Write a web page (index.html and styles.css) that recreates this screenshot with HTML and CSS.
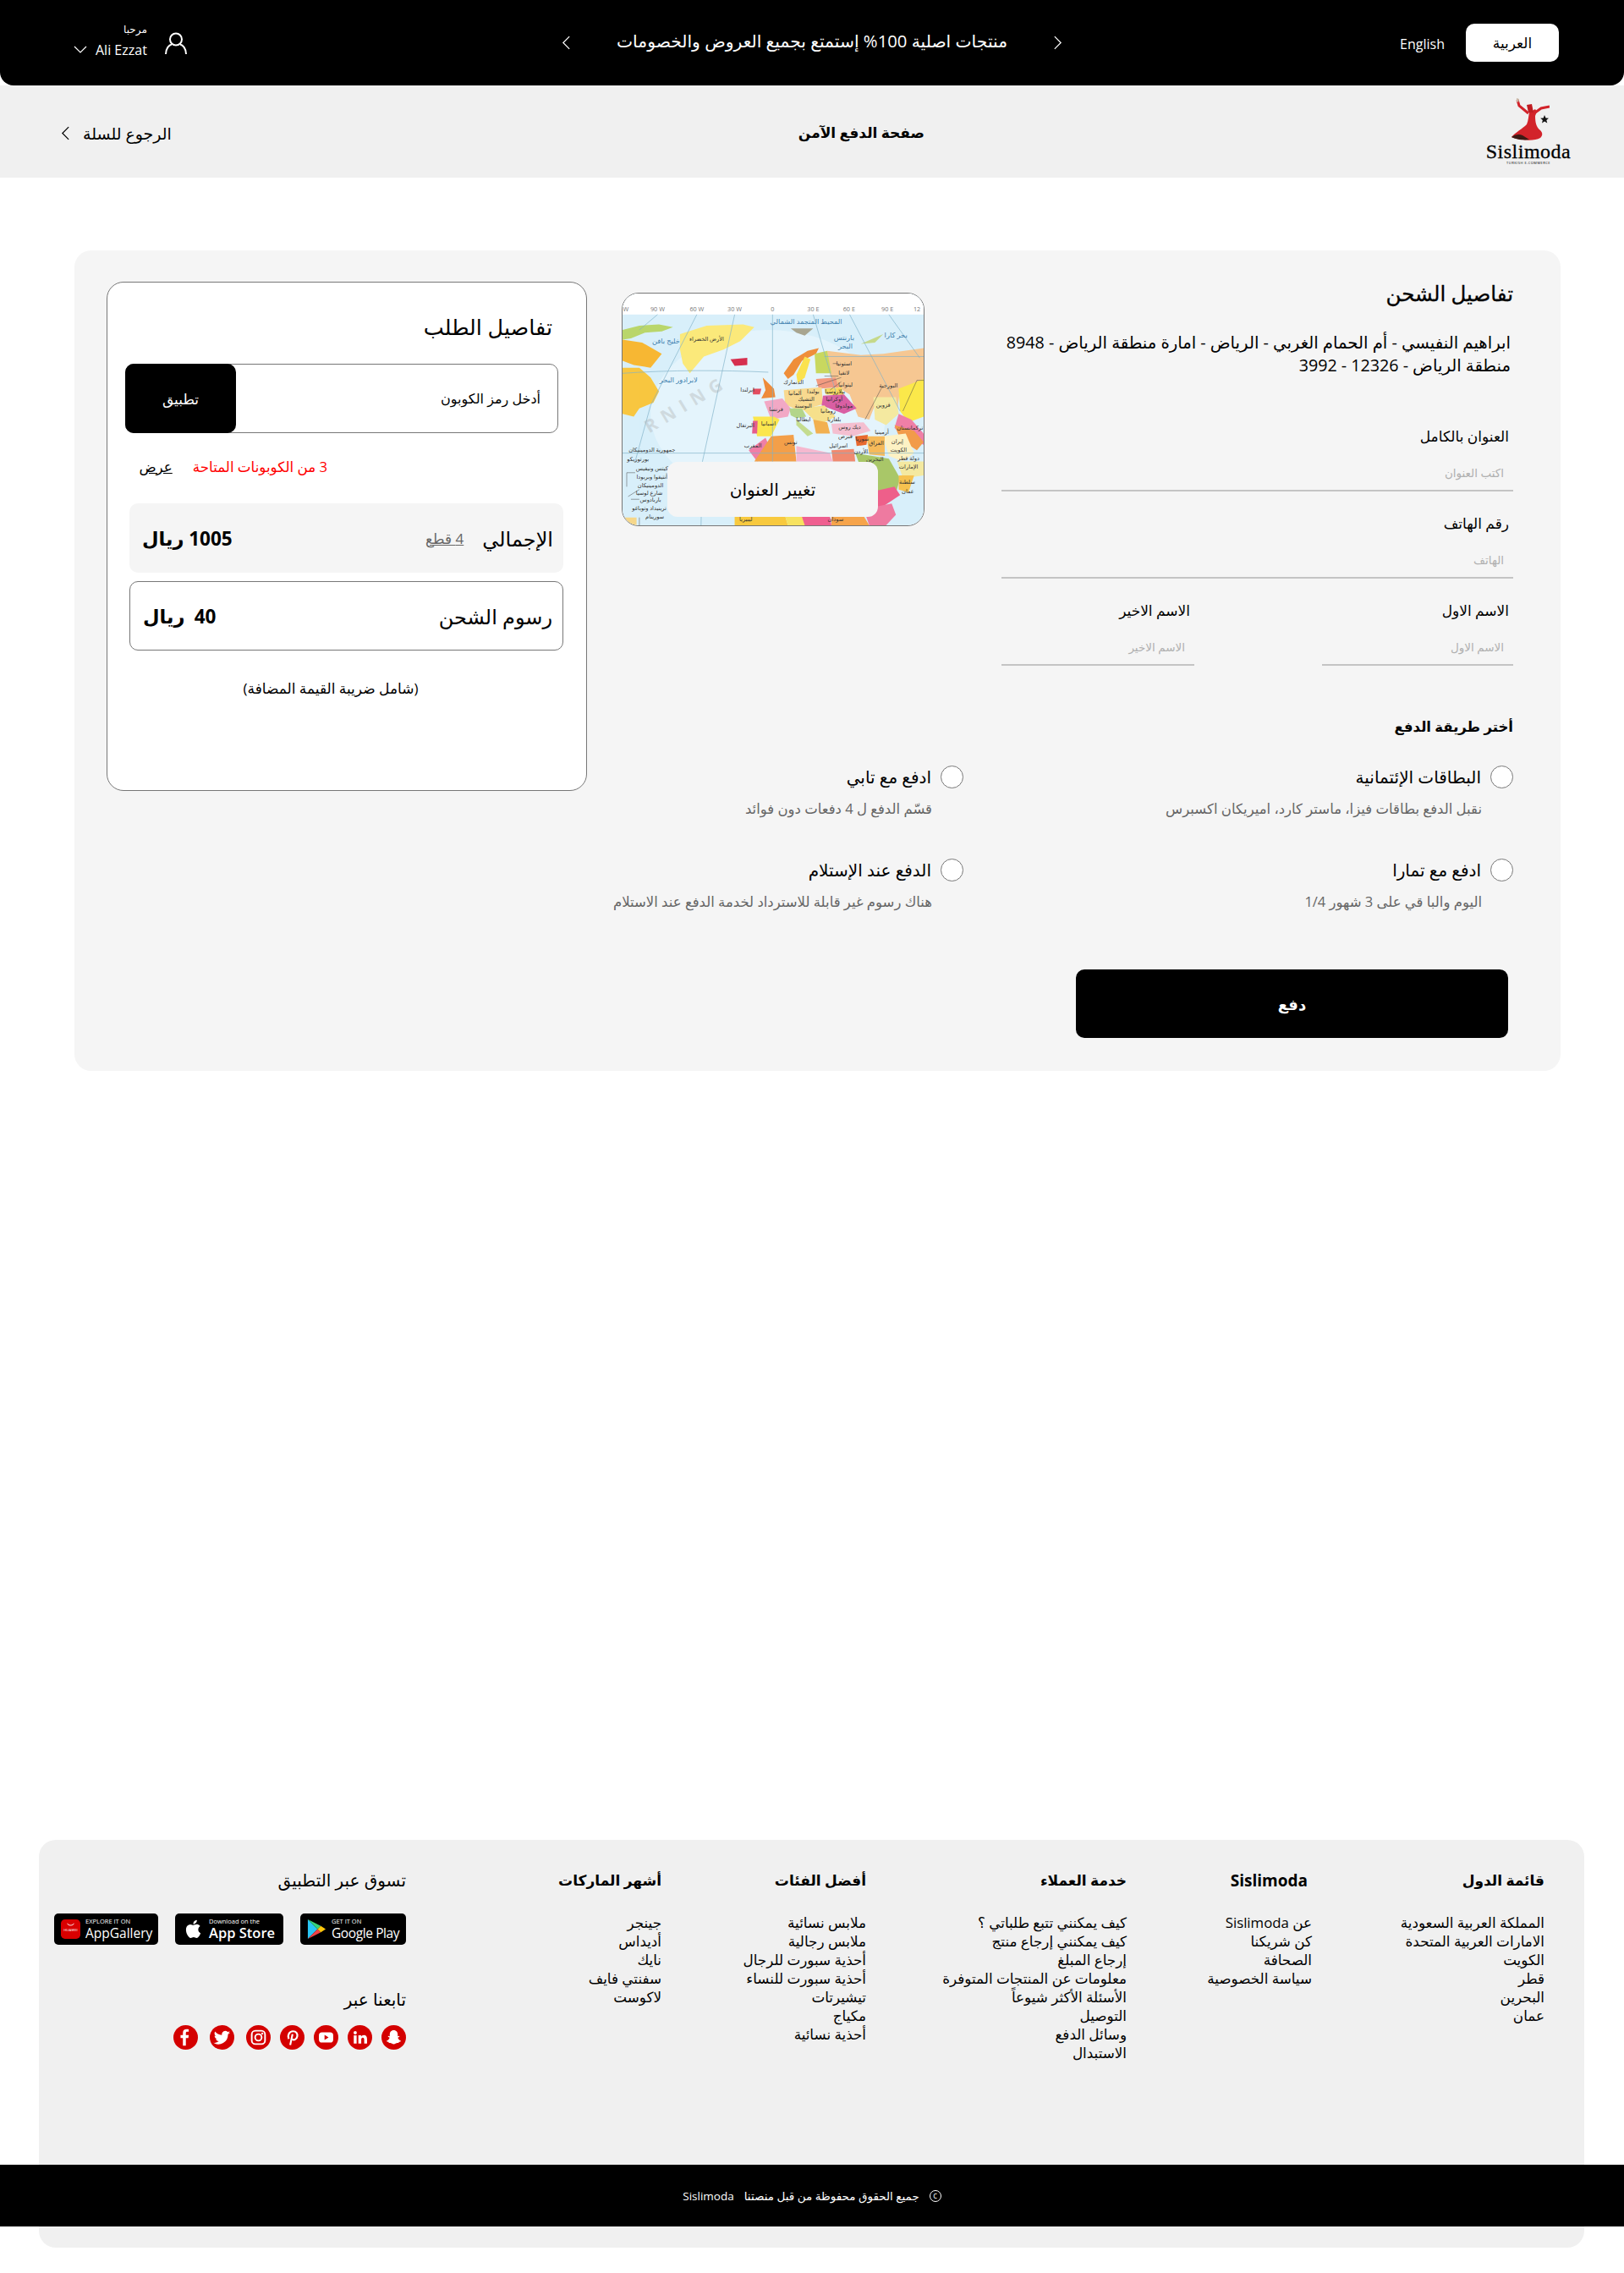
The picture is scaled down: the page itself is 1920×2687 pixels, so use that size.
FILE: index.html
```html
<!DOCTYPE html>
<html lang="ar" dir="rtl">

<head>
    <meta charset="UTF-8">
    <meta name="viewport" content="width=device-width, initial-scale=1.0">
    <title>Sislimoda</title>
    <link rel="stylesheet" href="styles.css">
</head>

<body>
    <header class="topbar">
        <div class="lang">
            <a class="lang-btn">العربية</a>
            <a class="lang-link" dir="ltr">English</a>
        </div>
        <div class="promo">
            <svg class="chev" viewBox="0 0 12 20"><path d="M2 2l8 8-8 8" /></svg>
            <span class="promo-text">منتجات اصلية 100% إستمتع بجميع العروض والخصومات</span>
            <svg class="chev" viewBox="0 0 12 20"><path d="M10 2l-8 8 8 8" /></svg>
        </div>
        <div class="user">
            <svg class="user-icon" viewBox="0 0 26 26"><circle cx="13" cy="8.500" r="7" /><path d="M1 26c0-7 4-11 7-11.500M25 26c0-7-4-11-7-11.500" /></svg>
            <div class="user-text">
                <span class="hello">مرحبا</span>
                <div class="user-name">
                    <span dir="ltr">Ali Ezzat</span>
                    <svg class="small-chev" viewBox="0 0 16 10"><path d="M1 1l7 7 7-7" /></svg>
                </div>
            </div>
        </div>
    </header>

    <div class="subbar">
        <div class="logo">
            <svg class="logo-art" viewBox="0 0 50 52">
                <path d="M26 17c-1 5-1 9-3 14C18 36 9 41 5 46c6 3 26 6 34 1 3-3 3-6 0-9-5-4-6-10-6-17l2-5-2-3z" fill="#d2232a" />
                <path d="M5 46c4-3 9-4 13-2l8 5c-6 1-16 0-21-3z" fill="#3c1a14" />
                <path d="M25 18L14 9l-2-7M33 17l7-5 10-2" fill="none" stroke="#d2232a" stroke-width="3" />
                <path d="M11 0l3 1-1 4-2-1z" fill="#c9b6a6" />
                <path d="M23 8l6-1 2 10h-6z" fill="#c01c22" />
                <path d="M44 20l1.500 3.500 3.500.300-2.700 2.200 1 3.500-3.300-2-3 2 .9-3.500-2.700-2.200 3.500-.300z" fill="#111" />
            </svg>
            <span class="logo-name" dir="ltr">Sislimoda</span>
            <span class="logo-sub" dir="ltr">TURKISH E.COMMERCE</span>
        </div>
        <h2 class="secure-title">صفحة الدفع الآمن</h2>
        <a class="back-link">
            <span>الرجوع للسلة</span>
            <svg class="chev chev-dark" viewBox="0 0 12 20"><path d="M10 2l-8 8 8 8" /></svg>
        </a>
    </div>

    <main class="checkout">
        <div class="checkout-main">
            <div class="shipping-row">
                <section class="shipping">
                    <h2 class="section-title">تفاصيل الشحن</h2>
                    <p class="address">ابراهيم النفيسي - أم الحمام الغربي - الرياض - امارة منطقة الرياض - 8948 منطقة الرياض - 12326 - 3992</p>
                    <div class="field">
                        <label>العنوان بالكامل</label>
                        <input type="text" placeholder="اكتب العنوان">
                    </div>
                    <div class="field">
                        <label>رقم الهاتف</label>
                        <input type="text" placeholder="الهاتف">
                    </div>
                    <div class="field-pair">
                        <div class="field">
                            <label>الاسم الاول</label>
                            <input type="text" placeholder="الاسم الاول">
                        </div>
                        <div class="field">
                            <label>الاسم الاخير</label>
                            <input type="text" placeholder="الاسم الاخير">
                        </div>
                    </div>
                </section>

                <div class="map-box">
                    <svg class="map" viewBox="0 0 1074 828" preserveAspectRatio="none">
                        <rect width="1074" height="828" fill="#d8effa" />
                        <ellipse cx="520" cy="430" rx="420" ry="300" fill="#e4f4fc" />
                        <rect width="1074" height="75" fill="#fff" />

                        <!-- americas -->
                        <path d="M0 130l60-15 70-5 50 10-40 15-60 5-50 20-30 5z" fill="#b9d66b" />
                        <path d="M0 165l70 10 70 40-40 50-60-10-40-15z" fill="#f7b733" />
                        <path d="M0 265h60l40 35 30 50-20 40-50 20-20 30-40-10z" fill="#f8c640" />
                        <path d="M205 145l95-30 130-5 40 10-50 50-60 30-70 25-50 60-25-35-10-50z" fill="#fbe97a" />
                        <path d="M385 235l60-5v25l-45 3z" fill="#d6304f" />
                        <path d="M0 800h50v28H0z" fill="#f6d78a" />

                        <!-- north and russia -->
                        <path d="M600 125h80l-30 25-30-10z" fill="#a8a590" />
                        <path d="M850 180l80-35-30 30z" fill="#c5d98a" />
                        <path d="M730 205l120 15 80-5 144-20v135l-84 10-10 80-80-20-20 50-40-10-30-80-50-30-20-40z" fill="#f6c792" />
                        <path d="M575 285l35-50 50-30 40-10-10 20-50 25-30 50-20 15z" fill="#ef8e3a" />
                        <path d="M620 290l30-65 20 10-20 65-25 20z" fill="#fbe24f" />
                        <path d="M685 215l45-10 15 80h-55z" fill="#c8d85f" />
                        <path d="M690 305l70-5 10 35-70 5z" fill="#f29a80" />

                        <!-- europe -->
                        <path d="M500 300l40 40 5 30-50 5 15-30z" fill="#ee8b3a" />
                        <path d="M465 340h30l-5 20h-25z" fill="#e34d60" />
                        <path d="M575 345l135-10 5 60-85 25-50-25z" fill="#f8d98f" />
                        <path d="M720 340l60-5 10 30-65-5z" fill="#f8d860" />
                        <path d="M715 365l75-5 45 50-45 20-80-30z" fill="#d95fa3" />
                        <path d="M505 385l65-10 30 35-10 30-60 10z" fill="#f2a8c5" />
                        <path d="M640 410l80-10 40 40-60 30-30-30z" fill="#f6e08b" />
                        <path d="M595 410h45l15 30-35 5-20-10z" fill="#b3d58a" />
                        <path d="M620 450l60 50-20 10-40-40z" fill="#c4dc8f" />
                        <path d="M680 450l50 10 10 40h-50z" fill="#f2b050" />
                        <path d="M465 440h75l20 10-30 60h-50z" fill="#fbe64e" />
                        <path d="M465 455h17l-2 45h-18z" fill="#e55d8d" />
                        <path d="M745 465l115-5 25 30-65 20-70-10z" fill="#f4bfd0" />

                        <!-- asia -->
                        <path d="M985 340l89-35v135l-54 20-30-40z" fill="#fbe84a" />
                        <path d="M895 370h80l10 60-45 40-40-20z" fill="#f4e9a0" />
                        <path d="M985 430l45 20 44 50v40l-74-30-30-30z" fill="#ef7fa7" />
                        <path d="M970 470l70 20 34 40-24 30-60-40z" fill="#f29b4a" />
                        <path d="M930 510l80-10 30 70-40 30-50-20z" fill="#fdf2c4" />
                        <path d="M870 510h65v70l-55-5z" fill="#f6ba5a" />
                        <path d="M830 510l45-5-5 35-35 5z" fill="#e8692f" />
                        <path d="M830 570l120 20 40 70-20 70-60 15-50-95z" fill="#a9c768" />
                        <path d="M980 600h94v50l-74 10z" fill="#f4e9a0" />
                        <path d="M985 650h55l-20 60-35-10z" fill="#f6c24f" />
                        <path d="M880 710l90-20 20 30-60 40-40 10z" fill="#ee5f8a" />

                        <!-- africa -->
                        <path d="M450 560l60-45 20 45-50 40z" fill="#ef7fa7" />
                        <path d="M470 600l60-90 80-5 10 95z" fill="#f39f49" />
                        <path d="M620 545l120 25 10 30H620z" fill="#f5b8cf" />
                        <path d="M745 560l80-5 5 45h-80z" fill="#f08a70" />
                        <path d="M400 795h180l10 33H400z" fill="#f8c93e" />
                        <path d="M580 795h120v33H590z" fill="#f7e260" />
                        <path d="M640 798h100l5 30h-95z" fill="#ef5f90" />
                        <path d="M745 795h115l20 33H745z" fill="#f6a44b" />
                        <path d="M860 770l100-20 15 40-35 38h-60z" fill="#ee7aa0" />

                        <g class="map-lines">
                            <path d="M535 75v525M400 75L285 600l-5 228M265 75L100 400 45 600M125 75L60 130M680 75l80 275M810 75l180 345M950 75l110 155" />
                            <path d="M0 285c170-12 350-12 520-4M0 570h1074M720 225h354" />
                        </g>
                        <g class="map-leaders">
                            <path d="M720 295h50M690 330l90-30M740 345l40-30M865 450l60-115M1000 420l50-110h24M770 250h-20M45 640H15v50M60 700l-40 25M30 735h30M60 800v28" />
                        </g>

                        <text class="map-mark" x="95" y="500" transform="rotate(-31 95 500)" direction="ltr">R N I N G</text>

                        <g class="map-deg" direction="ltr">
                            <text x="12" y="65">W</text><text x="125" y="65">90 W</text><text x="265" y="65">60 W</text><text x="400" y="65">30 W</text><text x="535" y="65">0</text><text x="680" y="65">30 E</text><text x="808" y="65">60 E</text><text x="945" y="65">90 E</text><text x="1050" y="65">12</text>
                        </g>
                        <g class="map-sea">
                            <text x="655" y="108">المحيط المتجمد الشمالي</text>
                            <text x="155" y="178">خليج بافن</text>
                            <text x="790" y="166">بارنتس</text>
                            <text x="795" y="196">البحر</text>
                            <text x="975" y="156">بحر كارا</text>
                            <text x="200" y="318">لابرادور البحر</text>
                        </g>
                        <g class="map-label">
                            <text x="300" y="168">الأرض الخضراء</text>
                            <text x="790" y="258">استونيا</text>
                            <text x="790" y="291">لاتفيا</text>
                            <text x="795" y="331">ليتوانيا</text>
                            <text x="758" y="356">بيلاروسيا</text>
                            <text x="948" y="336">البورجية</text>
                            <text x="610" y="324">الدنمارك</text>
                            <text x="445" y="351">ايرلندا</text>
                            <text x="680" y="358">بولندا</text>
                            <text x="615" y="363">ألمانيا</text>
                            <text x="548" y="421">فرنسا</text>
                            <text x="755" y="384">أوكرانيا</text>
                            <text x="790" y="408">مولدوفا</text>
                            <text x="733" y="426">رومانيا</text>
                            <text x="520" y="471">اسبانيا</text>
                            <text x="438" y="476">البرتغال</text>
                            <text x="645" y="456">ايطاليا</text>
                            <text x="755" y="456">بلغاريا</text>
                            <text x="810" y="484">ديك روس</text>
                            <text x="645" y="408">البوسنة</text>
                            <text x="655" y="384">التشيك</text>
                            <text x="795" y="516">قبرص</text>
                            <text x="465" y="551">المغرب</text>
                            <text x="600" y="539">تونس</text>
                            <text x="770" y="551">اسرائيل</text>
                            <text x="855" y="526">سوريا</text>
                            <text x="905" y="541">العراق</text>
                            <text x="980" y="536">إيران</text>
                            <text x="985" y="566">الكويت</text>
                            <text x="850" y="571">الأردن</text>
                            <text x="1020" y="596">دولة قطر</text>
                            <text x="900" y="598">البحرين</text>
                            <text x="930" y="404">قزوين</text>
                            <text x="1025" y="486">تركمانستان</text>
                            <text x="925" y="503">أرمينيا</text>
                            <text x="1018" y="714">عمان</text>
                            <text x="1020" y="626">الإمارات</text>
                            <text x="1015" y="680">سلطنة</text>
                            <text x="105" y="564">جمهورية الدومينيكان</text>
                            <text x="55" y="598">بورتوريكو</text>
                            <text x="105" y="631">كيتس ونيفيس</text>
                            <text x="105" y="663">أنتيغوا وبربودا</text>
                            <text x="100" y="693">الدومينيكان</text>
                            <text x="95" y="718">شارع لوسيا</text>
                            <text x="100" y="744">باربادوس</text>
                            <text x="95" y="774">ترينيداد وتوباغو</text>
                            <text x="115" y="804">سورينام</text>
                            <text x="440" y="812">ليبيريا</text>
                            <text x="760" y="812">سودان</text>
                        </g>
                    </svg>
                    <a class="change-address">تغيير العنوان</a>
                </div>
            </div>

            <section class="payment">
                <h3 class="payment-title">أختر طريقة الدفع</h3>
                <div class="pay-grid">
                    <div class="pay-item">
                        <div class="pay-head"><span class="radio"></span><span>البطاقات الإئتمانية</span></div>
                        <p class="pay-note">نقبل الدفع بطاقات فيزا، ماستر كارد، اميريكان اكسبرس</p>
                    </div>
                    <div class="pay-item">
                        <div class="pay-head"><span class="radio"></span><span>ادفع مع تابي</span></div>
                        <p class="pay-note">قسّم الدفع ل 4 دفعات دون فوائد</p>
                    </div>
                    <div class="pay-item">
                        <div class="pay-head"><span class="radio"></span><span>ادفع مع تمارا</span></div>
                        <p class="pay-note">اليوم والبا قي على 3 شهور 1/4</p>
                    </div>
                    <div class="pay-item">
                        <div class="pay-head"><span class="radio"></span><span>الدفع عند الإستلام</span></div>
                        <p class="pay-note">هناك رسوم غير قابلة للاسترداد لخدمة الدفع عند الاستلام</p>
                    </div>
                </div>
                <button class="pay-btn">دفع</button>
            </section>
        </div>

        <aside class="summary">
            <h2 class="summary-title">تفاصيل الطلب</h2>
            <div class="coupon">
                <span class="coupon-hint">أدخل رمز الكوبون</span>
                <button class="coupon-btn">تطبيق</button>
            </div>
            <div class="coupon-info">
                <span class="coupon-count">3 من الكوبونات المتاحة</span>
                <a class="coupon-view">عرض</a>
            </div>
            <div class="sum-row sum-total">
                <div class="sum-label">
                    <span>الإجمالي</span>
                    <a class="sum-pieces">4 قطع</a>
                </div>
                <strong class="sum-value">1005 ريال</strong>
            </div>
            <div class="sum-row sum-ship">
                <span class="sum-label">رسوم الشحن</span>
                <strong class="sum-value">40&ensp;ريال</strong>
            </div>
            <p class="vat">(شامل ضريبة القيمة المضافة)</p>
        </aside>
    </main>

    <footer class="footer">
        <div class="footer-cols">
            <div class="foot-col">
                <h4>قائمة الدول</h4>
                <ul>
                    <li>المملكة العربية السعودية</li>
                    <li>الامارات العربية المتحدة</li>
                    <li>الكويت</li>
                    <li>قطر</li>
                    <li>البحرين</li>
                    <li>عمان</li>
                </ul>
            </div>
            <div class="foot-col">
                <h4 class="foot-latin">Sislimoda</h4>
                <ul>
                    <li>عن Sislimoda</li>
                    <li>كن شريكنا</li>
                    <li>الصحافة</li>
                    <li>سياسة الخصوصية</li>
                </ul>
            </div>
            <div class="foot-col">
                <h4>خدمة العملاء</h4>
                <ul>
                    <li>كيف يمكنني تتبع طلباتي ؟</li>
                    <li>كيف يمكنني إرجاع منتج</li>
                    <li>إرجاع المبلغ</li>
                    <li>معلومات عن المنتجات المتوفرة</li>
                    <li>الأسئلة الأكثر شيوعاً</li>
                    <li>التوصيل</li>
                    <li>وسائل الدفع</li>
                    <li>الاستبدال</li>
                </ul>
            </div>
            <div class="foot-col">
                <h4>أفضل الفئات</h4>
                <ul>
                    <li>ملابس نسائية</li>
                    <li>ملابس رجالية</li>
                    <li>أحذية سبورت للرجال</li>
                    <li>أحذية سبورت للنساء</li>
                    <li>تيشيرتات</li>
                    <li>مكياج</li>
                    <li>أحذية نسائية</li>
                </ul>
            </div>
            <div class="foot-col">
                <h4>أشهر الماركات</h4>
                <ul>
                    <li>جينجر</li>
                    <li>أديداس</li>
                    <li>نايك</li>
                    <li>سفنتي فايف</li>
                    <li>لاكوست</li>
                </ul>
            </div>
            <div class="foot-col foot-apps">
                <h4>تسوق عبر التطبيق</h4>
                <div class="badges">
                    <a class="badge badge-play" dir="ltr">
                        <svg class="badge-icon" viewBox="0 0 24 26">
                            <path d="M1 1l12 12L1 25z" fill="#29c5f4" />
                            <path d="M1 1l16 8-4 4z" fill="#37d27a" />
                            <path d="M1 25l16-8-4-4z" fill="#ee4245" />
                            <path d="M17 9l6 4-6 4-4-4z" fill="#fdc70c" />
                        </svg>
                        <span class="badge-text"><small>GET IT ON</small><b>Google Play</b></span>
                    </a>
                    <a class="badge badge-apple" dir="ltr">
                        <svg class="badge-icon" viewBox="0 0 24 24"><path fill="#fff" d="M17.050 12.540c-.03-2.800 2.290-4.150 2.390-4.210-1.300-1.900-3.330-2.170-4.050-2.200-1.720-.17-3.360 1.010-4.240 1.010-.87 0-2.220-.99-3.660-.96-1.880.03-3.620 1.090-4.590 2.770-1.960 3.400-.5 8.430 1.410 11.180.93 1.350 2.040 2.870 3.500 2.810 1.400-.06 1.930-.91 3.630-.91 1.690 0 2.170.91 3.660.88 1.510-.03 2.470-1.370 3.390-2.730 1.070-1.560 1.510-3.080 1.530-3.160-.03-.01-2.940-1.130-2.970-4.480zM14.270 4.300c.77-.94 1.290-2.240 1.150-3.540-1.110.05-2.460.74-3.260 1.670-.71.830-1.340 2.160-1.170 3.430 1.240.1 2.510-.63 3.280-1.560z" /></svg>
                        <span class="badge-text"><small>Download on the</small><b>App Store</b></span>
                    </a>
                    <a class="badge badge-huawei" dir="ltr">
                        <svg class="badge-icon" viewBox="0 0 24 24">
                            <rect width="24" height="24" rx="5" fill="#d90000" />
                            <path d="M8 5c1 3 7 3 8 0" fill="none" stroke="#fff" stroke-width="1" />
                            <text class="huawei-word" x="12" y="15">HUAWEI</text>
                        </svg>
                        <span class="badge-text"><small>EXPLORE IT ON</small><b>AppGallery</b></span>
                    </a>
                </div>
                <h4 class="follow-title">تابعنا عبر</h4>
                <div class="socials">
                    <a class="social"><svg viewBox="0 0 24 24"><path fill="#fff" d="M12 5c2.600 0 3.900 2 3.900 4v1.900l1.400-.3c.5.200.4.800-.1 1l-1.200.6c.4 1.500 1.500 2.600 3 3.100.2.600-1 1-1.900 1.100l-.3.900c-1.400-.1-2.300.1-3.100.8-1 .7-2.400.7-3.400 0-.8-.7-1.700-.9-3.100-.8l-.3-.9c-.9-.1-2.100-.5-1.900-1.100 1.500-.5 2.600-1.600 3-3.100l-1.200-.6c-.5-.2-.6-.8-.1-1l1.400.3V9c0-2 1.300-4 3.900-4z" /></svg></a>
                    <a class="social"><svg viewBox="0 0 24 24"><rect x="6" y="10" width="2.800" height="8" fill="#fff" /><circle cx="7.400" cy="7.400" r="1.600" fill="#fff" /><path fill="#fff" d="M10.500 10h2.700v1.200c.5-.8 1.400-1.400 2.600-1.400 2.300 0 3.200 1.400 3.200 3.800V18h-2.800v-3.900c0-1.100-.4-1.900-1.400-1.900s-1.500.8-1.500 1.900V18h-2.800z" /></svg></a>
                    <a class="social"><svg viewBox="0 0 24 24"><rect x="5" y="7" width="14" height="10" rx="3" fill="#fff" /><path d="M10.500 9.500l4 2.500-4 2.500z" fill="#d40000" /></svg></a>
                    <a class="social"><svg viewBox="0 0 24 24"><path fill="none" stroke="#fff" stroke-width="1.800" d="M8.600 13.500C7 10 9 6 12.800 6c3.200 0 4.600 2.300 4.100 5-.5 2.800-3.300 4.200-4.700 2.600M12.300 8.800L10 19.500" /></svg></a>
                    <a class="social"><svg viewBox="0 0 24 24"><rect x="5.500" y="5.500" width="13" height="13" rx="3.500" fill="none" stroke="#fff" stroke-width="1.600" /><circle cx="12" cy="12" r="3.200" fill="none" stroke="#fff" stroke-width="1.600" /><circle cx="15.800" cy="8.200" r="1" fill="#fff" /></svg></a>
                    <a class="social social-far"><svg viewBox="0 0 24 24"><path fill="#fff" d="M20 7.200c-.6.300-1.200.4-1.900.5.700-.4 1.200-1 1.400-1.800-.6.400-1.300.6-2 .8a3.300 3.300 0 0 0-5.600 3c-2.700-.1-5.100-1.400-6.700-3.400a3.300 3.300 0 0 0 1 4.400c-.5 0-1-.2-1.500-.4 0 1.600 1.100 2.900 2.600 3.200-.5.100-1 .1-1.500 0 .4 1.300 1.600 2.200 3.100 2.300A6.600 6.600 0 0 1 3.500 17.200a9.300 9.300 0 0 0 14.300-8.300c.9-.4 1.600-1 2.200-1.700z" /></svg></a>
                    <a class="social social-far"><svg viewBox="0 0 24 24"><path fill="#fff" d="M15 6.500h-1.500c-1 0-1.300.5-1.300 1.400v1.800H15l-.4 2.900h-2.400V20H9.300v-7.400H7V9.700h2.300V7.500C9.300 5 10.700 4 12.800 4c1 0 1.800.1 2.200.1z" /></svg></a>
                </div>
            </div>
        </div>
        <div class="copyright">
            <span class="copy-mark">c</span>
            <span>جميع الحقوق محفوظة من قبل منصتنا</span>
            <span dir="ltr">Sislimoda</span>
        </div>
    </footer>
</body>

</html>
```

FILE: styles.css
```css
* {
    box-sizing: border-box;
}

body {
    margin: 0;
    background: #fff;
    color: #000;
    font-family: "Open Sans", "DejaVu Sans", sans-serif;
}

h2,
h3,
h4,
p,
ul {
    margin: 0;
    padding: 0;
}

ul {
    list-style: none;
}

/* top black bar */
.topbar {
    display: grid;
    grid-template-columns: 1fr auto 1fr;
    align-items: center;
    height: 101px;
    padding: 0 77px;
    background: #000;
    color: #fff;
    border-radius: 0 0 16px 16px;
}

.lang {
    display: flex;
    align-items: center;
    gap: 25px;
}

.lang-btn {
    width: 110px;
    height: 45px;
    line-height: 45px;
    text-align: center;
    background: #fff;
    color: #000;
    border-radius: 10px;
    font-size: 17px;
}

.lang-link {
    font-size: 16px;
    padding-top: 3px;
}

.promo {
    display: flex;
    align-items: center;
    justify-content: space-between;
    width: 592px;
}

.promo-text {
    margin-bottom: 5px;
    font-size: 20.300px;
}

.chev {
    width: 11px;
    height: 19px;
    fill: none;
    stroke: #fff;
    stroke-width: 1.300;
}

.chev-dark {
    stroke: #000;
}

.user {
    display: flex;
    align-items: center;
    gap: 21px;
    margin-left: 10px;
    justify-self: end;
}

.user-icon {
    width: 26px;
    height: 26px;
    fill: none;
    stroke: #fff;
    stroke-width: 2;
}

.user-text {
    display: flex;
    flex-direction: column;
    gap: 5px;
    margin-bottom: 5px;
}

.hello {
    font-size: 12px;
    line-height: 16px;
}

.user-name {
    display: flex;
    align-items: center;
    gap: 10px;
    font-size: 16px;
    line-height: 22px;
}

.small-chev {
    width: 16px;
    height: 10px;
    fill: none;
    stroke: #fff;
    stroke-width: 1.200;
}

/* page title bar */
.subbar {
    display: flex;
    align-items: center;
    height: 109px;
    padding: 0 63px 0 72px;
    background: #f0f0f0;
}

.logo {
    display: flex;
    flex-direction: column;
    align-items: center;
    width: 100px;
}

.logo-art {
    width: 50px;
    height: 52px;
}

.logo-name {
    font-family: "Liberation Serif", serif;
    font-size: 24px;
    line-height: 22px;
    letter-spacing: .5px;
    -webkit-text-stroke: .3px #000;
}

.logo-sub {
    font-size: 4px;
    line-height: 6px;
    letter-spacing: .5px;
}

.secure-title {
    margin-right: 664px;
    padding-top: 1px;
    font-size: 17px;
}

.back-link {
    display: flex;
    align-items: center;
    gap: 15px;
    margin-right: auto;
    padding-top: 4px;
    font-size: 19px;
}

/* checkout card */
.checkout {
    display: grid;
    grid-template-columns: 1fr 568px;
    column-gap: 21px;
    align-items: start;
    margin: 86px 75px 0 88px;
    padding: 34px 56px 39px 38px;
    background: #f5f5f5;
    border-radius: 20px;
}

.shipping-row {
    display: flex;
    justify-content: space-between;
    padding-left: 20px;
}

.shipping {
    width: 605px;
}

.section-title {
    font-size: 24.500px;
    line-height: 34px;
    font-weight: 500;
    -webkit-text-stroke: .3px #000;
}

.address {
    margin: 27px 0 60px;
    font-size: 19.700px;
    line-height: 27px;
    padding-right: 3px;
}

.field {
    margin-top: 27px;
}

.field label {
    display: block;
    padding-right: 5px;
    font-size: 17px;
    line-height: 22px;
}

.field input {
    display: block;
    width: 100%;
    height: 43px;
    margin-top: 11px;
    padding: 0 11px;
    border: 0;
    border-bottom: 2px solid #c4c4c4;
    background: none;
    font: inherit;
    font-size: 13.500px;
    text-align: right;
}

.field input::placeholder {
    color: #b0b0b0;
}

.field-pair {
    display: grid;
    grid-template-columns: 226px 228px;
    justify-content: space-between;
}

.map-box {
    position: relative;
    width: 358px;
    height: 276px;
    margin-top: 16px;
    border: 1px solid #777;
    border-radius: 20px;
    overflow: hidden;
}

.map {
    display: block;
    width: 100%;
    height: 100%;
}

.map text {
    text-anchor: middle;
}

.map-deg text {
    font-size: 22px;
    fill: #777;
}

.map-sea text {
    font-size: 25px;
    fill: #3f7fae;
}

.map-label text {
    font-size: 20px;
    fill: #333;
}

.map .map-mark {
    font-size: 64px;
    font-weight: 700;
    letter-spacing: 4px;
    fill: #aaa;
    opacity: .35;
    text-anchor: start;
}

.map-lines path {
    fill: none;
    stroke: #7fb1c9;
    stroke-width: 2;
}

.map-leaders path {
    fill: none;
    stroke: #444;
    stroke-width: 1.500;
}

.change-address {
    position: absolute;
    right: 54px;
    bottom: 10px;
    width: 249px;
    height: 65px;
    line-height: 65px;
    text-align: center;
    background: #f5f5f5;
    border-radius: 12px;
    font-size: 20px;
}

/* payment methods */
.payment-title {
    margin-top: 58px;
    font-size: 16.500px;
    line-height: 28px;
}

.pay-grid {
    display: grid;
    grid-template-columns: 650px 1fr;
    row-gap: 47px;
    margin-top: 32px;
}

.pay-head {
    display: flex;
    align-items: center;
    gap: 11px;
    font-size: 20px;
}

.radio {
    width: 27px;
    height: 27px;
    border: 1px solid #777;
    border-radius: 50%;
    background: #fff;
}

.pay-note {
    margin-top: 12px;
    padding-right: 37px;
    font-size: 16.500px;
    line-height: 24px;
    color: #666;
}

.pay-btn {
    display: block;
    width: 511px;
    height: 81px;
    margin: 68px 6px 0 0;
    border: 0;
    border-radius: 10px;
    background: #000;
    color: #fff;
    font: inherit;
    font-size: 18px;
    font-weight: 700;
}

/* order summary */
.summary {
    height: 602px;
    margin-top: 3px;
    padding: 34px 27px 0 22px;
    background: #fff;
    border: 1px solid #777;
    border-radius: 20px;
}

.summary-title {
    padding-right: 13px;
    font-size: 25.500px;
    line-height: 36px;
    font-weight: 500;
}

.coupon {
    display: flex;
    align-items: center;
    justify-content: space-between;
    width: 512px;
    height: 82px;
    margin: 26px 6px 0 0;
    padding-right: 20px;
    border: 1px solid #777;
    border-radius: 10px;
}

.coupon-hint {
    font-size: 16px;
}

.coupon-btn {
    width: 131px;
    height: 82px;
    margin-left: -1px;
    border: 0;
    border-radius: 10px;
    background: #000;
    color: #fff;
    font: inherit;
    font-size: 17px;
}

.coupon-info {
    display: flex;
    align-items: center;
    gap: 24px;
    height: 28px;
    margin-top: 25px;
    padding-right: 279px;
    font-size: 16.700px;
}

.coupon-count {
    color: #f00;
}

.coupon-view {
    text-decoration: underline;
}

.sum-row {
    display: flex;
    align-items: center;
    justify-content: space-between;
    width: 513px;
    height: 82px;
    padding: 0 12px 0 15px;
    border-radius: 10px;
}

.sum-total {
    margin-top: 30px;
    background: #f5f5f5;
}

.sum-ship {
    margin-top: 10px;
    border: 1px solid #777;
}

.sum-label {
    display: flex;
    align-items: center;
    gap: 22px;
    font-size: 24px;
}

.sum-pieces {
    font-size: 17px;
    color: #666;
    text-decoration: underline;
}

.sum-value {
    font-size: 22.500px;
}

.vat {
    width: 512px;
    margin-top: 33px;
    padding-right: 38px;
    text-align: center;
    font-size: 17px;
}

/* footer */
.footer {
    margin: 909px 47px 29px 46px;
    background: #f0f0f0;
    border-radius: 20px;
    padding-bottom: 25px;
}

.footer-cols {
    display: grid;
    grid-template-columns: 275px 219px 308px 242px 302px 1fr;
    height: 384px;
    padding: 30px 47px 0 0;
}

.foot-col h4 {
    font-size: 17px;
    line-height: 36px;
    font-weight: 700;
}

.foot-col .foot-latin {
    padding-right: 5px;
    font-size: 19px;
}

.foot-col ul {
    margin-top: 21px;
    font-size: 16.800px;
    line-height: 22px;
}

.foot-apps h4 {
    font-size: 20px;
    font-weight: 400;
}

.badges {
    display: flex;
    gap: 20px;
    margin-top: 21px;
}

.badge {
    display: flex;
    align-items: center;
    gap: 6px;
    height: 37px;
    padding: 0 8px;
    background: #000;
    color: #fff;
    border-radius: 5px;
}

.badge-play {
    width: 125px;
}

.badge-apple {
    width: 128px;
    padding-left: 11px;
}

.badge-huawei {
    width: 123px;
}

.badge-icon {
    width: 23px;
    height: 25px;
    flex: none;
}

.huawei-word {
    font-size: 4.500px;
    fill: #fff;
    text-anchor: middle;
}

.badge-text {
    display: flex;
    flex-direction: column;
    white-space: nowrap;
    font-family: "Open Sans", sans-serif;
}

.badge-text small {
    font-size: 7.500px;
    line-height: 9px;
}

.badge-text b {
    font-size: 15.500px;
    line-height: 18px;
    font-weight: 400;
}

.badge-apple .badge-text b {
    font-size: 16.500px;
    font-weight: 600;
}

.badge-play .badge-text b {
    letter-spacing: -.4px;
}

.foot-col .follow-title {
    margin-top: 47px;
}

.socials {
    display: flex;
    gap: 11px;
    margin-top: 12px;
}

.social {
    width: 29px;
    height: 29px;
    background: #d40000;
    border-radius: 50%;
}

.social-far {
    margin-right: 3px;
}

.social svg {
    display: block;
    width: 29px;
    height: 29px;
}

.copyright {
    display: flex;
    align-items: center;
    justify-content: center;
    gap: 12px;
    margin: 0 -47px 0 -46px;
    height: 73px;
    background: #000;
    color: #fff;
    font-size: 13.500px;
}

.copy-mark {
    width: 14px;
    height: 14px;
    line-height: 11px;
    border: 1px solid #fff;
    border-radius: 50%;
    text-align: center;
    font-size: 10px;
}
```
